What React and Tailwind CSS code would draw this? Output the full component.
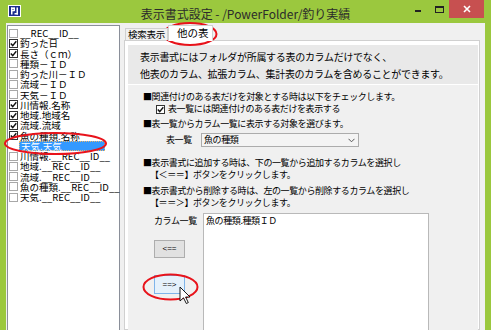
import React from "react";

const items = [
  ["__REC__ID__", false],
  ["釣った日", true],
  ["長さ（ｃｍ）", true],
  ["種類－ＩＤ", false],
  ["釣った川－ＩＤ", false],
  ["流域－ＩＤ", false],
  ["天気－ＩＤ", false],
  ["川情報.名称", true],
  ["地域.地域名", true],
  ["流域.流域", true],
  ["魚の種類.名称", true],
  ["天気.天気", false, true],
  ["川情報.__REC__ID__", false],
  ["地域.__REC__ID__", false],
  ["流域.__REC__ID__", false],
  ["魚の種類.__REC__ID__", false],
  ["天気.__REC__ID__", false],
];

function Check({ checked, dark }) {
  return (
    <span
      className={
        "w-[9px] h-[9px] shrink-0 bg-white border flex items-center justify-center " +
        (dark ? "border-[#333333]" : "border-[#a8a8a8]")
      }
    >
      {checked && (
        <svg width="7" height="7" viewBox="0 0 7 7">
          <path d="M0.8 3.6 L2.7 5.6 L6.3 1.2" fill="none" stroke="#111" strokeWidth="1.4" />
        </svg>
      )}
    </span>
  );
}

function Logo() {
  return (
    <svg width="13" height="12" viewBox="0 0 13 12">
      <rect x="0" y="0" width="13" height="12" fill="#ffffff" />
      <rect x="1" y="1" width="11" height="10" fill="#1d2f8f" />
      <rect x="3" y="2.5" width="1.5" height="7" fill="#ffffff" />
      <rect x="3" y="2.5" width="3.5" height="1.5" fill="#ffffff" />
      <rect x="5.5" y="2.5" width="1.5" height="3.5" fill="#ffffff" />
      <rect x="3" y="5" width="3.5" height="1.3" fill="#ffffff" />
      <rect x="8.5" y="2.5" width="1.5" height="7" fill="#ffffff" />
      <rect x="6.5" y="8" width="3.5" height="1.5" fill="#ffffff" />
    </svg>
  );
}

const sec = "shrink-0 h-[12px] text-[9px] leading-[12px] tracking-[-0.4px] text-black whitespace-nowrap";

export default function App() {
  return (
    <div className="relative w-[491px] h-[330px] overflow-hidden bg-[#9bc83e] flex flex-col font-['Noto_Sans_CJK_JP','Noto_Sans',sans-serif]">
      {/* Title bar */}
      <div className="h-[23px] shrink-0 grid grid-cols-[1fr_auto_1fr]">
        <div className="flex items-start pl-[8px] pt-[5px]">
          <Logo />
        </div>
        <div className="text-[12px] leading-[12px] pt-[8px] text-[#2b2b2b] whitespace-nowrap">
          表示書式設定 - /PowerFolder/釣り実績
        </div>
        <div className="flex items-start justify-end pr-[7px]">
          <div className="w-[6px] h-[2px] bg-[#222] mt-[10px]" />
          <div className="w-[9px] h-[7px] border border-[#222] border-t-2 mt-[6px] ml-[14px]" />
          <div className="w-[35px] h-[18px] bg-[#c75050] ml-[5px] flex items-center justify-center">
            <svg width="8" height="8" viewBox="0 0 8 8">
              <path d="M1 1 L7 7 M7 1 L1 7" stroke="#ffffff" strokeWidth="1.6" />
            </svg>
          </div>
        </div>
      </div>

      {/* Client area */}
      <div className="h-[307px] shrink-0 mx-[6px] bg-[#f0f0f0] flex pt-[2px]">
        {/* left checked list */}
        <div className="ml-[1px] w-[113px] shrink-0 bg-white border border-[#8a8f99] pt-[2px] h-[320px]">
          {items.map(([label, checked, selected], i) => (
            <div key={i} className="flex items-center h-[10.25px]">
              <div className="ml-[1px] w-[9px] shrink-0">{!selected && <Check checked={checked} dark={checked} />}</div>
              {selected ? (
                <span className="ml-[1px] pl-[1px] w-[86px] h-[10px] bg-[#3399ff] text-white text-[9.5px] leading-[8px] whitespace-nowrap border border-dotted border-[#e6b46e]">
                  {label}
                </span>
              ) : (
                <span className="ml-[2px] text-[9.5px] leading-[10px] text-black whitespace-nowrap">{label}</span>
              )}
            </div>
          ))}
        </div>

        {/* Tab control */}
        <div className="ml-[4px] w-[356px] shrink-0 flex flex-col">
          <div className="h-[15px] shrink-0 flex items-end pl-[1px] relative z-10">
            <div className="w-[43px] h-[12px] border border-b-0 border-[#d0d0d0] bg-[#f0f0f0] text-[9.5px] leading-[11px] tracking-[-0.2px] text-black text-center whitespace-nowrap">
              検索表示
            </div>
            <div className="w-[45px] h-[16px] -mb-[1px] border border-b-0 border-[#d0d0d0] bg-white text-[10.5px] leading-[14px] text-black pl-[8px] whitespace-nowrap">
              他の表
            </div>
          </div>
          <div className="h-[290px] shrink-0 border border-[#d0d0d0] bg-white pl-[3px] pr-[1px] pt-[4px] flex flex-col">
            <div className="h-[39px] shrink-0 bg-[#e9e9e9] pl-[12px] pt-[3px] text-[10px] leading-[17px] tracking-[-0.3px] text-black whitespace-nowrap">
              <div>表示書式にはフォルダが所属する表のカラムだけでなく、</div>
              <div>他表のカラム、拡張カラム、集計表のカラムを含めることができます。</div>
            </div>
            <div className="mt-[1px] h-[250px] shrink-0 bg-[#f0f0f0] pl-[15px] pt-[6px] flex flex-col">
              <div className={sec}>■関連付けのある表だけを対象とする時は以下をチェックします。</div>
              <div className="shrink-0 flex items-center pl-[13px] gap-[3px] h-[12px]">
                <Check checked dark />
                <span className="text-[9px] leading-[12px] tracking-[-0.4px] text-black whitespace-nowrap">表一覧には関連付けのある表だけを表示する</span>
              </div>
              <div className={sec + " mt-[3px]"}>■表一覧からカラム一覧に表示する対象を選びます。</div>
              <div className="shrink-0 h-[14px] flex items-center mt-[3px] pl-[23px]">
                <span className="w-[35px] text-[9px] leading-[12px] tracking-[-0.4px] text-black whitespace-nowrap">表一覧</span>
                <div className="w-[158px] h-[14px] border border-[#acacac] bg-[#f4f4f4] flex items-center justify-between pl-[2px] pr-[3px]">
                  <span className="text-[9px] leading-[12px] tracking-[-0.4px] text-black whitespace-nowrap">魚の種類</span>
                  <svg width="7" height="5" viewBox="0 0 7 5">
                    <path d="M0.5 0.8 L3.5 3.8 L6.5 0.8" fill="none" stroke="#555" strokeWidth="1" />
                  </svg>
                </div>
              </div>
              <div className={sec + " mt-[10px]"}>■表示書式に追加する時は、下の一覧から追加するカラムを選択し</div>
              <div className={sec + " pl-[7px]"}>【＜＝＝】ボタンをクリックします。</div>
              <div className={sec + " mt-[4px]"}>■表示書式から削除する時は、左の一覧から削除するカラムを選択し</div>
              <div className={sec + " pl-[7px]"}>【＝＝＞】ボタンをクリックします。</div>
              <div className="flex mt-[4px] flex-1 pl-[11px]">
                <div className="w-[49px] flex flex-col pt-[2px]">
                  <span className="text-[9px] leading-[12px] tracking-[-0.4px] text-black whitespace-nowrap">カラム一覧</span>
                  <div className="mt-[13px] w-[31px] h-[18px] border border-[#adadad] bg-[#e1e1e1] flex items-center justify-center text-[8px] leading-[8px] text-black font-['Liberation_Sans',sans-serif]">
                    &lt;==
                  </div>
                  <div className="mt-[17px] w-[31px] h-[19px] border border-[#7eb4ea] bg-[#e5f1fb] flex items-center justify-center text-[8px] leading-[8px] text-black font-['Liberation_Sans',sans-serif]">
                    ==&gt;
                  </div>
                </div>
                <div className="w-[226px] bg-white border border-[#b9b9b9] pl-[2px] pt-[1px]">
                  <div className="text-[9px] leading-[12px] tracking-[-0.4px] text-black whitespace-nowrap">魚の種類.種類ＩＤ</div>
                </div>
              </div>
            </div>
          </div>
        </div>
      </div>

      {/* Red annotation ellipses and cursor overlay */}
      <svg className="absolute left-0 top-0 pointer-events-none" width="491" height="330" viewBox="0 0 491 330">
        <ellipse cx="190" cy="34" rx="26.5" ry="11" fill="none" stroke="#e8131b" strokeWidth="2" />
        <ellipse cx="55.5" cy="143.5" rx="50.5" ry="10.5" fill="none" stroke="#e8131b" strokeWidth="2" />
        <ellipse cx="170.5" cy="287" rx="27" ry="12.5" fill="none" stroke="#e8131b" strokeWidth="2" />
        <path
          d="M180 287 L180 301 L183.5 297.8 L186.3 303.5 L188.3 302.6 L185.6 297 L190 297 Z"
          fill="#ffffff"
          stroke="#000000"
          strokeWidth="0.9"
          strokeLinejoin="round"
        />
      </svg>
    </div>
  );
}
